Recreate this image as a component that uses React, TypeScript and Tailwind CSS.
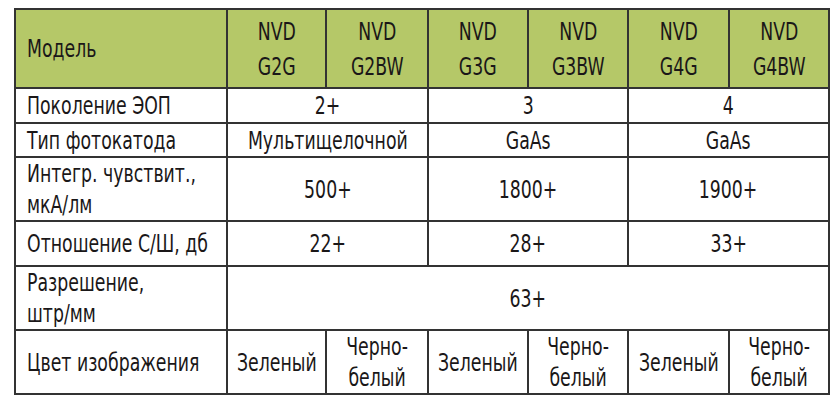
const font = { fontFamily: '"DejaVu Sans Condensed", "DejaVu Sans", sans-serif', fontStretch: 'condensed' as const };

const models = [
  ['NVD', 'G2G'],
  ['NVD', 'G2BW'],
  ['NVD', 'G3G'],
  ['NVD', 'G3BW'],
  ['NVD', 'G4G'],
  ['NVD', 'G4BW'],
];

const border = 'border-2 border-[#333333] align-middle p-0';

// the source uses a very narrow condensed face; squeeze the installed one horizontally
function Mid({ lines, lh = 'leading-[31px]' }: { lines: string[]; lh?: string }) {
  return (
    <div className={`flex justify-center ${lh}`}>
      <div className="shrink-0 whitespace-nowrap text-center scale-x-[0.77] origin-center">
        {lines.map((l, i) => (
          <div key={i}>{l}</div>
        ))}
      </div>
    </div>
  );
}

function Label({ lines }: { lines: string[] }) {
  return (
    <td className={`${border} pl-[11px]`}>
      <div className="whitespace-nowrap leading-[31px] scale-x-[0.77] origin-left">
        {lines.map((l, i) => (
          <div key={i}>{l}</div>
        ))}
      </div>
    </td>
  );
}

function Val({ text, span = 2 }: { text: string | string[]; span?: number }) {
  return (
    <td colSpan={span} className={border}>
      <Mid lines={Array.isArray(text) ? text : [text]} />
    </td>
  );
}

export default function App() {
  return (
    <div className="w-[835px] h-[401px] bg-white pt-[8px] pl-[14px] text-[#1a1718]" style={font}>
      <table className="border-collapse text-[25px] leading-[31px] table-fixed w-[814px]">
        <colgroup>
          <col className="w-[212px]" />
          <col className="w-[99px]" />
          <col className="w-[102px]" />
          <col className="w-[100px]" />
          <col className="w-[100px]" />
          <col className="w-[101px]" />
          <col className="w-[100px]" />
        </colgroup>
        <tbody>
          <tr className="h-[79px] bg-[#b5c868]">
            <Label lines={['Модель']} />
            {models.map(([a, b]) => (
              <td key={b} className={border}>
                <Mid lines={[a, b]} lh="leading-[35px]" />
              </td>
            ))}
          </tr>
          <tr className="h-[35px]">
            <Label lines={['Поколение ЭОП']} />
            <Val text="2+" />
            <Val text="3" />
            <Val text="4" />
          </tr>
          <tr className="h-[34px]">
            <Label lines={['Тип фотокатода']} />
            <Val text="Мультищелочной" />
            <Val text="GaAs" />
            <Val text="GaAs" />
          </tr>
          <tr className="h-[63px]">
            <Label lines={['Интегр. чувствит.,', 'мкА/лм']} />
            <Val text="500+" />
            <Val text="1800+" />
            <Val text="1900+" />
          </tr>
          <tr className="h-[45px]">
            <Label lines={['Отношение С/Ш, дб']} />
            <Val text="22+" />
            <Val text="28+" />
            <Val text="33+" />
          </tr>
          <tr className="h-[64px]">
            <Label lines={['Разрешение,', 'штр/мм']} />
            <Val text="63+" span={6} />
          </tr>
          <tr className="h-[63px]">
            <Label lines={['Цвет изображения']} />
            <Val text="Зеленый" span={1} />
            <Val text={['Черно-', 'белый']} span={1} />
            <Val text="Зеленый" span={1} />
            <Val text={['Черно-', 'белый']} span={1} />
            <Val text="Зеленый" span={1} />
            <Val text={['Черно-', 'белый']} span={1} />
          </tr>
        </tbody>
      </table>
    </div>
  );
}
